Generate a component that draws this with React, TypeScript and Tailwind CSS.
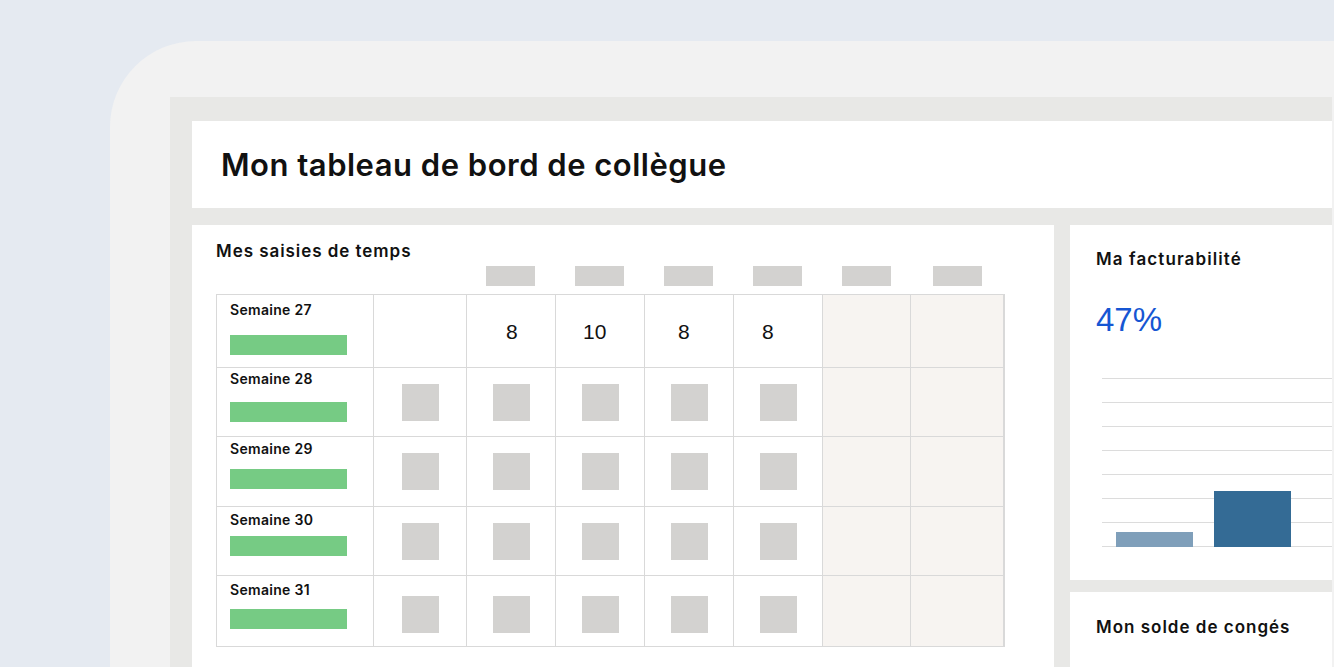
import React from 'react';

const cols = 'grid grid-cols-[157px_93px_89px_89px_89px_89px_88px_94px]';

// rows: height, label offset, bar offset
const weeks = [
    { label: 'Semaine 27', h: 'h-[73px]', pt: 'pt-[6px]', gap: 'mt-[16px]', values: ['', '8', '10', '8', '8'] },
    { label: 'Semaine 28', h: 'h-[69px]', pt: 'pt-[2px]', gap: 'mt-[14px]' },
    { label: 'Semaine 29', h: 'h-[70px]', pt: 'pt-[3px]', gap: 'mt-[11px]' },
    { label: 'Semaine 30', h: 'h-[69px]', pt: 'pt-[4px]', gap: 'mt-[7px]' },
    { label: 'Semaine 31', h: 'h-[71px]', pt: 'pt-[5px]', gap: 'mt-[10px]' },
];

const valuePad = ['', 'pl-[39px]', 'pl-[27px]', 'pl-[33px]', 'pl-[28px]'];

const TimeTable: React.FC = () => (
    <div className="border-l border-t border-[#d9d9d9] w-[789px]">
        {weeks.map((w, i) => (
            <div key={w.label} className={`${cols} ${w.h}`}>
                <div className={`border-r border-b border-[#d9d9d9] pl-[13px] ${w.pt}`}>
                    <div className="text-[14px] leading-[18px] font-semibold text-[#111] tracking-[0.3px]">{w.label}</div>
                    <div className={`w-[117px] h-[20px] bg-[#76cb84] ${w.gap}`} />
                </div>
                {[0, 1, 2, 3, 4].map((c) => (
                    <div key={c} className="border-r border-b border-[#d9d9d9] flex items-center">
                        {w.values ? (
                            <span className={`font-['Liberation_Sans',sans-serif] text-[21px] text-[#111] ${valuePad[c]} pt-[1px]`}>
                                {w.values[c]}
                            </span>
                        ) : (
                            <div className={`w-[37px] h-[37px] bg-[#d3d2d0] mx-auto ${i === 4 ? 'mt-[7px]' : ''}`} />
                        )}
                    </div>
                ))}
                <div className="border-r border-b border-[#d9d9d9] bg-[#f7f4f1]" />
                <div className="border-r-2 border-b border-[#d9d9d9] bg-[#f7f4f1]" />
            </div>
        ))}
    </div>
);

const BillingChart: React.FC = () => (
    <div className="relative ml-[6px] mt-[43px] h-[170px]">
        <div className="flex flex-col gap-[23px]">
            {Array.from({ length: 8 }).map((_, i) => (
                <div key={i} className="h-px bg-[#dcdcdc]" />
            ))}
        </div>
        <div className="absolute bottom-[1px] left-[14px] flex items-end gap-[21px]">
            <div className="w-[77px] h-[15px] bg-[#7f9fba]" />
            <div className="w-[77px] h-[56px] bg-[#346b95]" />
        </div>
    </div>
);

export default function App() {
    return (
        <div className="w-[1334px] h-[667px] overflow-hidden bg-[#e5eaf1] pl-[110px] pt-[41px] font-['Inter',sans-serif]">
            <div className="h-full bg-[#f2f2f2] rounded-tl-[86px] pl-[60px] pt-[56px] pr-[2px]">
                <div className="h-full bg-[#e8e8e6] pl-[22px] pt-[24px] flex flex-col">
                    <div className="h-[87px] bg-white pl-[29px] flex items-center">
                        <h1 className="text-[31px] font-semibold text-[#111] tracking-[0.5px] pt-[2px]">
                            Mon tableau de bord de collègue
                        </h1>
                    </div>

                    <div className="flex gap-[16px] mt-[17px] flex-1">
                        <div className="w-[862px] bg-white pl-[24px] pt-[14px]">
                            <h2 className="text-[17px] leading-[24px] font-semibold text-[#111] tracking-[0.95px]">Mes saisies de temps</h2>
                            <div className={`${cols} w-[789px] mt-[3px] h-[28px]`}>
                                <div />
                                <div />
                                {[0, 1, 2, 3, 4, 5].map((i) => (
                                    <div key={i} className="flex justify-center">
                                        <div className="w-[49px] h-[20px] bg-[#d3d2d0]" />
                                    </div>
                                ))}
                            </div>
                            <TimeTable />
                        </div>

                        <div className="flex-1 flex flex-col gap-[12px]">
                            <div className="h-[355px] bg-white pl-[26px] pt-[22px]">
                                <h2 className="text-[17px] leading-[24px] font-semibold text-[#111] tracking-[1.1px]">Ma facturabilité</h2>
                                <div className="mt-[34px] font-['Liberation_Sans',sans-serif] text-[33px] leading-[30px] text-[#1656d3]">47%</div>
                                <BillingChart />
                            </div>
                            <div className="flex-1 bg-white pl-[26px] pt-[23px]">
                                <h2 className="text-[17px] leading-[24px] font-semibold text-[#111] tracking-[1px]">Mon solde de congés</h2>
                            </div>
                        </div>
                    </div>
                </div>
            </div>
        </div>
    );
}
